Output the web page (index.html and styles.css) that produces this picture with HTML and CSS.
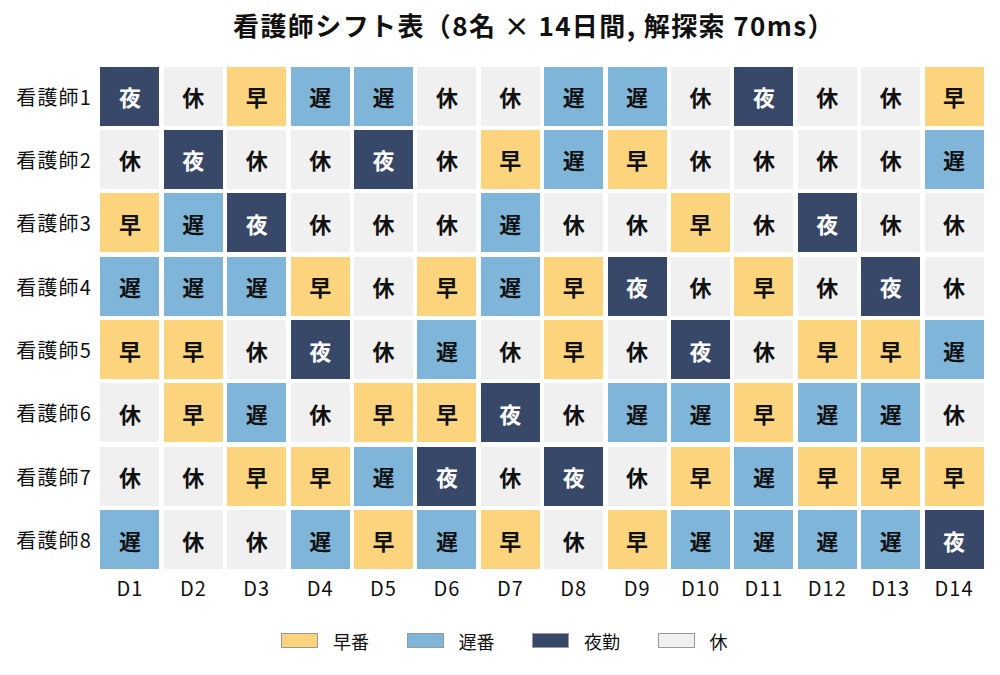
FILE: index.html
```html
<!DOCTYPE html>
<html lang="ja">
<head>
<meta charset="utf-8">
<title>看護師シフト表</title>
<link rel="stylesheet" href="styles.css">
</head>
<body>
<div class="title">看護師シフト表（8名 × 14日間, 解探索 70ms）</div>
<div class="chart">
  <div class="rlabel">看護師1</div>
  <div class="c n">夜</div><div class="c o">休</div><div class="c e">早</div><div class="c l">遅</div><div class="c l">遅</div><div class="c o">休</div><div class="c o">休</div><div class="c l">遅</div><div class="c l">遅</div><div class="c o">休</div><div class="c n">夜</div><div class="c o">休</div><div class="c o">休</div><div class="c e">早</div>
  <div class="rlabel">看護師2</div>
  <div class="c o">休</div><div class="c n">夜</div><div class="c o">休</div><div class="c o">休</div><div class="c n">夜</div><div class="c o">休</div><div class="c e">早</div><div class="c l">遅</div><div class="c e">早</div><div class="c o">休</div><div class="c o">休</div><div class="c o">休</div><div class="c o">休</div><div class="c l">遅</div>
  <div class="rlabel">看護師3</div>
  <div class="c e">早</div><div class="c l">遅</div><div class="c n">夜</div><div class="c o">休</div><div class="c o">休</div><div class="c o">休</div><div class="c l">遅</div><div class="c o">休</div><div class="c o">休</div><div class="c e">早</div><div class="c o">休</div><div class="c n">夜</div><div class="c o">休</div><div class="c o">休</div>
  <div class="rlabel">看護師4</div>
  <div class="c l">遅</div><div class="c l">遅</div><div class="c l">遅</div><div class="c e">早</div><div class="c o">休</div><div class="c e">早</div><div class="c l">遅</div><div class="c e">早</div><div class="c n">夜</div><div class="c o">休</div><div class="c e">早</div><div class="c o">休</div><div class="c n">夜</div><div class="c o">休</div>
  <div class="rlabel">看護師5</div>
  <div class="c e">早</div><div class="c e">早</div><div class="c o">休</div><div class="c n">夜</div><div class="c o">休</div><div class="c l">遅</div><div class="c o">休</div><div class="c e">早</div><div class="c o">休</div><div class="c n">夜</div><div class="c o">休</div><div class="c e">早</div><div class="c e">早</div><div class="c l">遅</div>
  <div class="rlabel">看護師6</div>
  <div class="c o">休</div><div class="c e">早</div><div class="c l">遅</div><div class="c o">休</div><div class="c e">早</div><div class="c e">早</div><div class="c n">夜</div><div class="c o">休</div><div class="c l">遅</div><div class="c l">遅</div><div class="c e">早</div><div class="c l">遅</div><div class="c l">遅</div><div class="c o">休</div>
  <div class="rlabel">看護師7</div>
  <div class="c o">休</div><div class="c o">休</div><div class="c e">早</div><div class="c e">早</div><div class="c l">遅</div><div class="c n">夜</div><div class="c o">休</div><div class="c n">夜</div><div class="c o">休</div><div class="c e">早</div><div class="c l">遅</div><div class="c e">早</div><div class="c e">早</div><div class="c e">早</div>
  <div class="rlabel">看護師8</div>
  <div class="c l">遅</div><div class="c o">休</div><div class="c o">休</div><div class="c l">遅</div><div class="c e">早</div><div class="c l">遅</div><div class="c e">早</div><div class="c o">休</div><div class="c e">早</div><div class="c l">遅</div><div class="c l">遅</div><div class="c l">遅</div><div class="c l">遅</div><div class="c n">夜</div>
  <div class="rlabel"></div>
  <div class="dlabel">D1</div><div class="dlabel">D2</div><div class="dlabel">D3</div><div class="dlabel">D4</div><div class="dlabel">D5</div><div class="dlabel">D6</div><div class="dlabel">D7</div><div class="dlabel">D8</div><div class="dlabel">D9</div><div class="dlabel">D10</div><div class="dlabel">D11</div><div class="dlabel">D12</div><div class="dlabel">D13</div><div class="dlabel">D14</div>
</div>
<div class="legend">
  <div class="item"><span class="sw e"></span><span>早番</span></div>
  <div class="item"><span class="sw l"></span><span>遅番</span></div>
  <div class="item"><span class="sw n"></span><span>夜勤</span></div>
  <div class="item"><span class="sw o"></span><span>休</span></div>
</div>
</body>
</html>
```
FILE: styles.css
```css
html, body {
  margin: 0;
  padding: 0;
  background: #ffffff;
}
body {
  width: 1000px;
  height: 675px;
  font-family: "Noto Sans CJK JP", "Noto Sans", sans-serif;
  color: #111;
}
.title {
  height: 50px;
  line-height: 50px;
  padding-left: 68px;
  text-align: center;
  font-size: 26px;
  font-weight: 700;
  letter-spacing: 1.4px;
}
.chart {
  margin-top: 16.5px;
  display: grid;
  grid-template-columns: 96.1px repeat(14, 59px);
  grid-template-rows: repeat(8, 59px) 28px;
  column-gap: 4.4px;
  row-gap: 4.4px;
}
.rlabel {
  display: flex;
  align-items: center;
  justify-content: flex-end;
  padding-right: 4px;
  font-size: 20px;
  letter-spacing: 1.2px;
  color: #111;
}
.c {
  display: flex;
  align-items: center;
  justify-content: center;
  font-size: 22px;
  font-weight: 700;
  color: #111;
}
.e { background: #fdd47e; }
.l { background: #7fb5d9; }
.n { background: #384869; color: #ffffff; }
.o { background: #f0f0f0; }
.dlabel {
  display: flex;
  align-items: center;
  justify-content: center;
  font-size: 20px;
  letter-spacing: 1px;
  color: #111;
}
.legend {
  margin-top: 26px;
  margin-left: 281px;
  display: flex;
  gap: 37.5px;
  align-items: center;
}
.item {
  display: flex;
  align-items: center;
  gap: 15px;
  font-size: 18px;
}
.sw {
  width: 35px;
  height: 13px;
  border: 1.5px solid #999999;
}
```
